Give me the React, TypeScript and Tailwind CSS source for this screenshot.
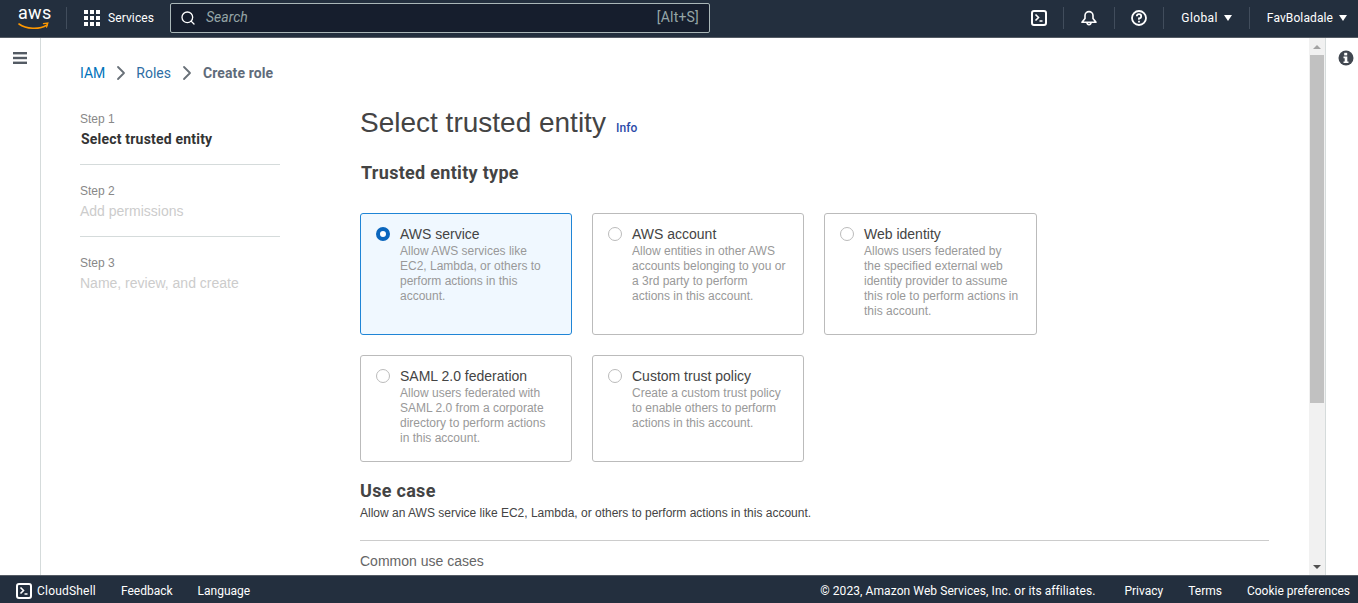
import { ChevronRight, Search } from 'lucide-react';

const EMBER = "font-['Roboto','Noto_Sans',sans-serif]";

const STEPS = [
  { step: 'Step 1', label: 'Select trusted entity', active: true },
  { step: 'Step 2', label: 'Add permissions', active: false },
  { step: 'Step 3', label: 'Name, review, and create', active: false },
];

const ENTITIES = [
  {
    title: 'AWS service',
    lines: ['Allow AWS services like', 'EC2, Lambda, or others to', 'perform actions in this', 'account.'],
    selected: true,
  },
  {
    title: 'AWS account',
    lines: ['Allow entities in other AWS', 'accounts belonging to you or', 'a 3rd party to perform', 'actions in this account.'],
  },
  {
    title: 'Web identity',
    lines: ['Allows users federated by', 'the specified external web', 'identity provider to assume', 'this role to perform actions in', 'this account.'],
  },
  {
    title: 'SAML 2.0 federation',
    lines: ['Allow users federated with', 'SAML 2.0 from a corporate', 'directory to perform actions', 'in this account.'],
  },
  {
    title: 'Custom trust policy',
    lines: ['Create a custom trust policy', 'to enable others to perform', 'actions in this account.'],
  },
];

function AwsLogo() {
  return (
    <div className="relative h-[26px] w-[32px]">
      <span className="absolute left-0 top-[-4px] font-['Roboto',sans-serif] text-[18px] leading-[24px] tracking-[0.3px] text-white">aws</span>
      <svg viewBox="0 0 32 10" className="absolute left-0 top-[17px] h-[10px] w-[32px]" fill="none" aria-hidden="true">
        <path d="M1 2c7 5 20 6 28 1" stroke="#ff9900" strokeWidth="1.6" strokeLinecap="round" />
        <path d="M25.5 1.6l4.3-.5-1.2 4" stroke="#ff9900" strokeWidth="1.3" strokeLinecap="round" />
      </svg>
    </div>
  );
}

function GridIcon() {
  return (
    <svg viewBox="0 0 16 16" className="h-4 w-4" fill="#fff" aria-hidden="true">
      {[0, 6, 12].map((y) =>
        [0, 6, 12].map((x) => <rect key={`${x}-${y}`} x={x} y={y} width="4" height="4" />),
      )}
    </svg>
  );
}

function ShellIcon({ className }: { className: string }) {
  return (
    <svg viewBox="0 0 16 16" className={className} fill="none" stroke="#fff" aria-hidden="true">
      <rect x="1" y="1" width="14" height="14" rx="2" strokeWidth="2" />
      <path d="M4.5 4.5l3 3-3 3M8.5 11h3" strokeWidth="1.6" />
    </svg>
  );
}

function BellIcon() {
  return (
    <svg viewBox="0 0 16 16" className="h-4 w-4" fill="none" stroke="#fff" strokeWidth="1.6" aria-hidden="true">
      <path d="M1 12.3h14L12 8.4V5.6a4 4 0 0 0-8 0v2.8Z" strokeLinejoin="round" />
      <path d="M6 12.6a2 2 0 0 0 4 0" />
    </svg>
  );
}

function HelpIcon() {
  return (
    <svg viewBox="0 0 16 16" className="h-4 w-4" fill="none" stroke="#fff" strokeWidth="1.8" aria-hidden="true">
      <circle cx="8" cy="8" r="7" />
      <path d="M5.8 6.2A2.2 2.2 0 1 1 8 8.5v1.2" />
      <path d="M8 10.8v1.8" />
    </svg>
  );
}

function Caret() {
  return <span className="ml-[6px] h-0 w-0 border-x-[4.5px] border-t-[6px] border-x-transparent border-t-white" />;
}

function Divider() {
  return <span className="h-[22px] w-px bg-[#414d5c]" />;
}

function Header() {
  return (
    <header className={`flex h-[38px] shrink-0 items-center border-b border-b-[#545b64] bg-[#232f3e] pb-[2px] text-white ${EMBER}`}>
      <div className="ml-[18px]">
        <AwsLogo />
      </div>
      <span className="ml-[16px] flex">
        <Divider />
      </span>
      <div className="ml-[16px] flex items-center gap-[8px] text-[12px] tracking-[0.1px]">
        <span className="ml-px flex"><GridIcon /></span>
        <span>Services</span>
      </div>
      <div className="ml-[16px] flex h-[30px] w-[540px] items-center rounded-[2px] border border-[#aab7b8] bg-[#161e2d] pl-[9px] pr-[10px]">
        <Search className="h-4 w-4 text-white" strokeWidth={2} />
        <span className="ml-[10px] flex-1 text-[14px] italic text-[#95a5a6]">Search</span>
        <span className="text-[14px] tracking-[0.2px] text-[#95a5a6]">[Alt+S]</span>
      </div>
      <div className="ml-auto flex items-center">
        <ShellIcon className="h-4 w-4" />
        <span className="ml-[16px] flex"><Divider /></span>
        <span className="ml-[17px] flex"><BellIcon /></span>
        <span className="ml-[17px] flex"><Divider /></span>
        <span className="ml-[16px] flex"><HelpIcon /></span>
        <span className="ml-[16px] flex"><Divider /></span>
        <span className="ml-[17px] text-[12px] tracking-[0.4px]">Global</span>
        <Caret />
        <span className="ml-[17px] flex"><Divider /></span>
        <span className="ml-[17px] text-[12px] tracking-[0.1px]">FavBoladale</span>
        <span className="mr-[11px] flex"><Caret /></span>
      </div>
    </header>
  );
}

function StepNav() {
  return (
    <nav className="w-[200px] shrink-0 pt-[3px]">
      {STEPS.map((s, i) => (
        <div key={s.step} className={i < 2 ? 'mb-[18px] h-[54px] border-b border-[#d5dbdb]' : ''}>
          <div className="text-[12px] leading-[16px] text-[#888888]">{s.step}</div>
          {s.active ? (
            <div className={`ml-px mt-[2px] text-[14px] font-bold leading-[20px] tracking-[0.2px] text-[#333333] ${EMBER}`}>{s.label}</div>
          ) : (
            <div className="mt-[2px] text-[14px] leading-[20px] text-[#cccccc]">{s.label}</div>
          )}
        </div>
      ))}
    </nav>
  );
}

function EntityCard({ title, lines, selected }: { title: string; lines: string[]; selected?: boolean }) {
  return (
    <div
      className={`flex rounded-[3px] border pl-[15px] pr-2 pt-[12px] ${
        selected ? 'border-[#1f85d6] bg-[#f0f8ff]' : 'border-[#bbbbbb] bg-white'
      }`}
    >
      {selected ? (
        <span className="mt-px h-[14px] w-[14px] shrink-0 rounded-full border-[4px] border-[#0b66bd] bg-white" />
      ) : (
        <span className="mt-px h-[14px] w-[14px] shrink-0 rounded-full border border-[#bbbbbb] bg-white" />
      )}
      <div className="ml-[10px]">
        <div className="mb-[2px] text-[14px] leading-[16px] text-[#444444]">{title}</div>
        <div className="text-[12px] leading-[15px] text-[#999999]">
          {lines.map((line) => (
            <div key={line}>{line}</div>
          ))}
        </div>
      </div>
    </div>
  );
}

function Scrollbar() {
  return (
    <div className="flex w-[17px] shrink-0 flex-col border-r border-[#d5dbdb] bg-[#f1f1f1]">
      <div className="flex h-[17px] items-center justify-center">
        <span className="h-0 w-0 border-x-[4px] border-b-[4px] border-x-transparent border-b-[#a3a3a3]" />
      </div>
      <div className="mx-px h-[348px] bg-[#c1c1c1]" />
      <div className="flex-1" />
      <div className="flex h-[16px] items-center justify-center">
        <span className="h-0 w-0 border-x-[4px] border-t-[4px] border-x-transparent border-t-[#505050]" />
      </div>
    </div>
  );
}

function Main() {
  return (
    <main className="min-w-0 flex-1 overflow-hidden pl-[39px] font-['Liberation_Sans',sans-serif]">
      <div className={`flex h-[70px] items-center text-[14px] ${EMBER}`}>
        <span className="text-[#0073bb]">IAM</span>
        <ChevronRight className="ml-[4px] mr-[3px] h-6 w-6 text-[#687078]" strokeWidth={1.8} />
        <span className="text-[#2e6da4]">Roles</span>
        <ChevronRight className="mx-[4px] h-6 w-6 text-[#687078]" strokeWidth={1.8} />
        <span className="font-bold tracking-[0.1px] text-[#5f6b7a]">Create role</span>
      </div>
      <div className="flex">
        <StepNav />
        <div className="ml-[80px] w-[909px] shrink-0">
          <div className="mt-[-2px] flex items-baseline">
            <h1 className="text-[28px] leading-[34px] text-[#444444]">Select trusted entity</h1>
            <span className={`ml-[10px] text-[12px] font-medium tracking-[0.1px] text-[#2b4aa8] ${EMBER}`}>Info</span>
          </div>
          <h2 className={`ml-px mt-[22px] text-[18px] font-bold leading-[22px] tracking-[0.3px] text-[#444444] ${EMBER}`}>Trusted entity type</h2>
          <div className="mt-[29px] grid grid-cols-[212px_212px_213px] grid-rows-[122px_107px] gap-x-[20px] gap-y-[20px]">
            {ENTITIES.map((e) => (
              <EntityCard key={e.title} title={e.title} lines={e.lines} selected={e.selected} />
            ))}
          </div>
          <h2 className={`mt-[18px] text-[18px] font-bold leading-[22px] tracking-[0.3px] text-[#444444] ${EMBER}`}>Use case</h2>
          <p className="mt-[3px] text-[12px] leading-[16px] text-[#444444]">Allow an AWS service like EC2, Lambda, or others to perform actions in this account.</p>
          <div className="mt-[19px] border-t border-[#cccccc] pt-[11px] text-[14px] leading-[18px] text-[#666666]">Common use cases</div>
        </div>
      </div>
    </main>
  );
}

function Footer() {
  return (
    <footer className={`flex h-[28px] shrink-0 items-center border-t border-t-[#545b64] bg-[#232f3e] pl-[16px] pr-[8px] pt-[2px] text-[12px] text-white ${EMBER}`}>
      <ShellIcon className="h-4 w-4" />
      <span className="ml-[5px] tracking-[0.2px]">CloudShell</span>
      <span className="ml-[25px]">Feedback</span>
      <span className="ml-[25px]">Language</span>
      <span className="ml-auto tracking-[0.08px]">© 2023, Amazon Web Services, Inc. or its affiliates.</span>
      <span className="ml-[29px]">Privacy</span>
      <span className="ml-[25px]">Terms</span>
      <span className="ml-[25px]">Cookie preferences</span>
    </footer>
  );
}

export default function App() {
  return (
    <div className="flex h-[603px] w-[1358px] flex-col overflow-hidden bg-white">
      <Header />
      <div className="flex min-h-0 flex-1">
        <aside className="flex w-[41px] shrink-0 justify-center border-r border-[#d5dbdb] pt-[14px]">
          <svg viewBox="0 0 14 12" className="h-[12px] w-[14px]" fill="#545b64" aria-hidden="true">
            <rect y="0" width="14" height="2.4" />
            <rect y="4.8" width="14" height="2.4" />
            <rect y="9.6" width="14" height="2.4" />
          </svg>
        </aside>
        <Main />
        <Scrollbar />
        <aside className="flex w-[32px] shrink-0 justify-center pl-2 pt-[12px]">
          <svg viewBox="0 0 16 16" className="h-4 w-4" aria-hidden="true">
            <circle cx="8" cy="8" r="7.5" fill="#414750" />
            <rect x="6.2" y="2.8" width="3" height="2.6" fill="#fff" />
            <path d="M5.5 6.6h3.8v4.8h1.2v1.6h-5v-1.6h1.2V8.2H5.5Z" fill="#fff" />
          </svg>
        </aside>
      </div>
      <Footer />
    </div>
  );
}
